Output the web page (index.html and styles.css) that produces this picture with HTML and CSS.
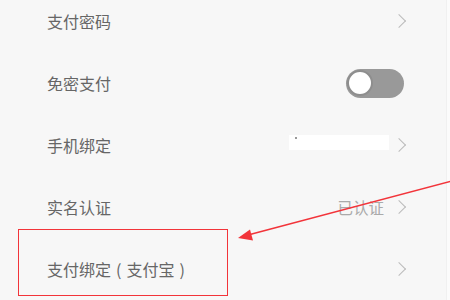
FILE: index.html
```html
<!DOCTYPE html>
<html lang="zh-CN">
<head>
<meta charset="utf-8">
<link rel="stylesheet" href="styles.css">
</head>
<body>
<div class="page">
  <ul class="list">
    <li class="row">
      <span class="label">支付密码</span>
      <span class="right"><span class="chev"></span></span>
    </li>
    <li class="row">
      <span class="label">免密支付</span>
      <span class="right"><span class="toggle"><span class="knob"></span></span></span>
    </li>
    <li class="row">
      <span class="label">手机绑定</span>
      <span class="right"><span class="redact"></span><span class="chev"></span></span>
    </li>
    <li class="row">
      <span class="label">实名认证</span>
      <span class="right"><span class="value">已认证</span><span class="chev"></span></span>
    </li>
    <li class="row">
      <span class="label">支付绑定<span class="paren">(</span>支付宝<span class="paren">)</span></span>
      <span class="right"><span class="chev"></span></span>
    </li>
  </ul>
  <div class="edge"></div>
  <div class="highlight"></div>
  <svg class="arrow" width="450" height="300" viewBox="0 0 450 300">
    <line x1="452" y1="181" x2="248" y2="235" stroke="#f2343a" stroke-width="1.6"/>
    <polygon points="238,238 250,229.5 253,240.5" fill="#f2343a"/>
  </svg>
</div>
</body>
</html>
```

FILE: styles.css
```css
html, body {
  margin: 0;
  padding: 0;
  background: #f7f7f7;
}
.page {
  position: relative;
  width: 450px;
  height: 300px;
  overflow: hidden;
  font-family: "Noto Sans CJK SC", "Noto Sans", sans-serif;
}
.list {
  list-style: none;
  margin: -10px 0 0 0;
  padding: 0;
}
.row {
  height: 62px;
  display: flex;
  align-items: center;
  justify-content: space-between;
  padding: 0 43px 0 47px;
}
.label {
  font-size: 16px;
  color: #666;
  letter-spacing: 0;
}
.paren {
  margin: 0 5px;
}
.right {
  display: flex;
  align-items: center;
}
.chev {
  width: 9px;
  height: 9px;
  border-top: 1.5px solid #bbb;
  border-right: 1.5px solid #bbb;
  transform: rotate(45deg);
  margin-right: 3px;
}
.value {
  font-size: 15.5px;
  color: #aaa;
  margin-right: 10px;
}
.redact {
  position: relative;
  width: 100px;
  height: 15px;
  background: #fff;
  margin-right: 5px;
  margin-top: -6px;
}
.redact::before {
  content: "";
  position: absolute;
  left: 6px;
  top: 2px;
  width: 2px;
  height: 2px;
  background: #999;
}
.toggle {
  width: 58px;
  height: 29px;
  border-radius: 15px;
  background: #999;
  display: flex;
  align-items: center;
  padding-left: 1px;
  box-sizing: border-box;
  margin-right: 3px;
}
.knob {
  width: 22px;
  height: 22px;
  border-radius: 50%;
  background: #fff;
  border: 2px solid #8e8e8e;
}
.edge {
  position: absolute;
  right: 0;
  top: 0;
  width: 3px;
  height: 300px;
  background: #fbfbfb;
  border-left: 1px solid #f0f0f0;
}
.highlight {
  position: absolute;
  left: 18px;
  top: 229px;
  width: 210px;
  height: 67px;
  border: 1.5px solid #f2343a;
  box-sizing: border-box;
}
.arrow {
  position: absolute;
  left: 0;
  top: 0;
}
```
